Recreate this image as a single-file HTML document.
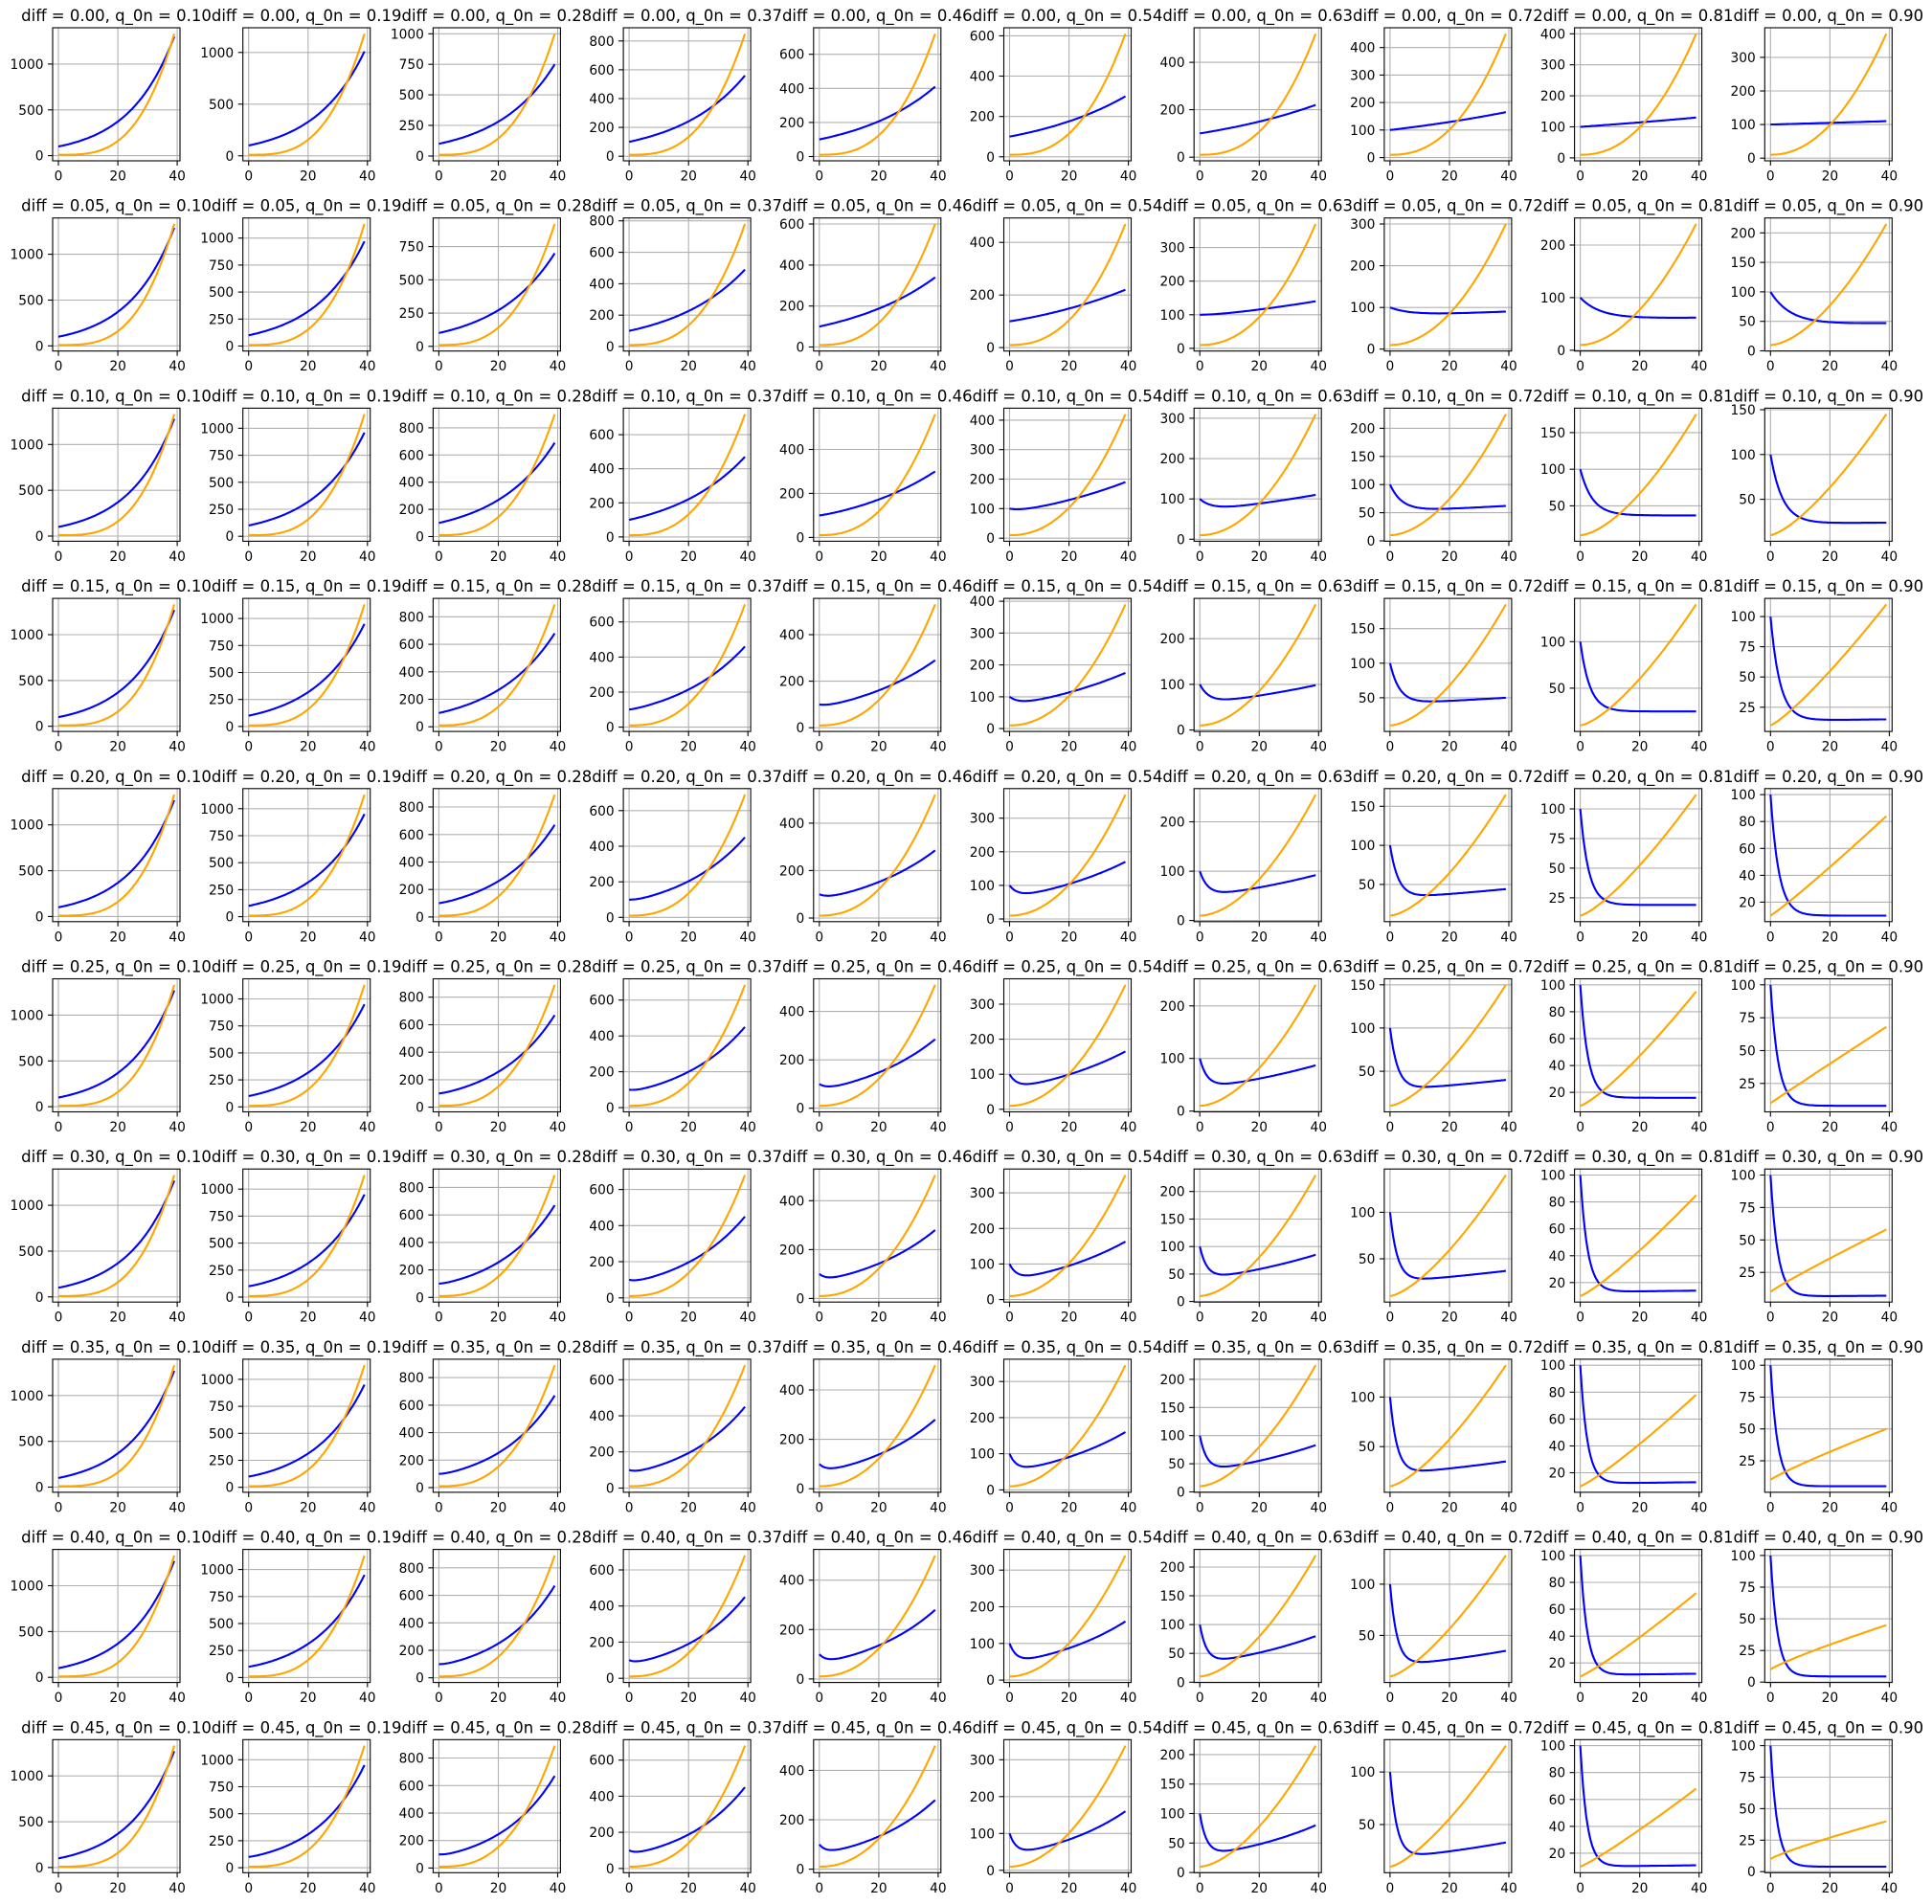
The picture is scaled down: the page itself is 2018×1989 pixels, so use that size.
<!DOCTYPE html>
<html><head><meta charset="utf-8">
<style>
html,body{margin:0;padding:0;background:#fff;}
#c{width:2018px;height:1989px;overflow:hidden;}
text{font-family:"DejaVu Sans","Liberation Sans",sans-serif;fill:#000;}
</style></head>
<body><div id="c"></div>
<script>
const EB=[
[1300,1010,750,560,410,300,220,165,130,110],
[1290,970,700,490,340,220,140,90,62,47],
[1280,960,690,470,300,190,110,62,37,24],
[1270,950,680,460,290,175,98,50,25,15],
[1270,950,670,450,285,170,92,44,19,10],
[1270,950,670,450,285,165,87,40,16,8],
[1270,950,670,450,280,163,85,37,14,7],
[1270,950,670,450,280,160,83,35,13,5],
[1270,950,670,450,280,160,80,35,12,4.5],
[1270,950,670,450,280,160,80,33,11,4]];
const EO=[
[1330,1180,1000,850,720,610,520,450,400,370],
[1330,1130,920,780,600,470,370,300,240,215],
[1330,1130,900,720,560,420,310,225,175,145],
[1330,1130,890,700,530,390,275,185,140,110],
[1330,1130,890,690,520,370,255,165,112,84],
[1330,1130,890,685,510,355,240,150,95,68],
[1330,1130,890,680,505,350,230,140,85,58],
[1330,1130,890,680,500,345,225,132,78,50],
[1330,1130,890,680,500,340,220,128,72,45],
[1330,1130,890,680,500,338,215,125,68,40]];
const CT=[
[100,100,100,100,100,100,100,100,100,100],
[100,100,100,100,100,98,94,80,60,45],
[100,100,100,100,96,86,70,52,37,23],
[100,100,100,96,86,72,57,41,25,14],
[100,100,96,88,78,62,48,32,19,10],
[100,100,94,85,74,58,43,28,16,8],
[100,98,92,82,70,54,40,25,13,6.5],
[100,97,90,80,66,50,36,22,12,5],
[100,96,88,77,63,46,32,20,11,4.5],
[100,95,85,75,60,42,28,18,10,4]];
const QL=["0.10","0.19","0.28","0.37","0.46","0.54","0.63","0.72","0.81","0.90"];
const W=133,H=139,P=198.7,X0=55,Y0=29;
let s='<svg xmlns="http://www.w3.org/2000/svg" width="2018" height="1989" viewBox="0 0 2018 1989"><rect width="2018" height="1989" fill="#fff"/>';
function fmt(v){v=Math.round(v*1000)/1000;return Number.isInteger(v)?String(v):String(v);}
for(let i=0;i<10;i++){for(let j=0;j<10;j++){
 const d=0.05*i,q=0.1+0.8*j/9;
 const ax=X0+P*j,ay=Y0+P*i;
 const C=CT[i][j],k=0.45*(1-Math.exp(-8*d)),E=EB[i][j];
 let inner=E-(100-C)*Math.exp(-39*k); if(inner<=0)inner=C*0.5;
 const a=Math.log(inner/C)/39;
 const p=3.4-1.45*q-1.6*(q-0.1)*(1-Math.exp(-8*d));
 const bl=[],or=[];
 for(let t=0;t<=39;t+=0.5){
  bl.push([t,(100-C)*Math.exp(-k*t)+C*Math.exp(a*t)]);
  or.push([t,10+(EO[i][j]-10)*Math.pow(t/39,p)]);
 }
 let mn=Infinity,mx=-Infinity;
 for(const v of bl.concat(or)){mn=Math.min(mn,v[1]);mx=Math.max(mx,v[1]);}
 const r=mx-mn,vmin=mn-0.05*r,vmax=mx+0.05*r;
 const xmin=-1.95,xmax=40.95;
 const fx=x=>ax+(x-xmin)/(xmax-xmin)*W, fy=y=>ay+H-(y-vmin)/(vmax-vmin)*H;
 // y ticks
 const raw=(vmax-vmin)/5,sc=Math.pow(10,Math.floor(Math.log10(raw)));
 let step=10*sc;for(const m of [1,2,2.5,5,10]){if(m*sc>=raw-1e-9){step=m*sc;break;}}
 const yt=[];for(let n=Math.ceil(vmin/step);n<=Math.floor(vmax/step);n++)yt.push(n*step);
 // grid
 for(const x of [0,20,40]){const X=fx(x).toFixed(1);s+=`<line x1="${X}" y1="${ay}" x2="${X}" y2="${ay+H}" stroke="#b0b0b0" stroke-width="1.1"/>`;}
 for(const y of yt){const Y=fy(y).toFixed(1);s+=`<line x1="${ax}" y1="${Y}" x2="${ax+W}" y2="${Y}" stroke="#b0b0b0" stroke-width="1.1"/>`;}
 // curves
 const pth=arr=>arr.map((v,n)=>(n?'L':'M')+fx(v[0]).toFixed(1)+' '+fy(v[1]).toFixed(1)).join('');
 s+=`<path d="${pth(bl)}" fill="none" stroke="#0000ff" stroke-width="2.1"/>`;
 s+=`<path d="${pth(or)}" fill="none" stroke="#ffa500" stroke-width="2.1"/>`;
 // spines
 s+=`<rect x="${ax}" y="${ay}" width="${W}" height="${H}" fill="none" stroke="#000" stroke-width="1.1"/>`;
 // ticks + labels
 for(const x of [0,20,40]){const X=fx(x);s+=`<line x1="${X.toFixed(1)}" y1="${ay+H}" x2="${X.toFixed(1)}" y2="${ay+H+5}" stroke="#000" stroke-width="1.1"/><text x="${X.toFixed(1)}" y="${(ay+H+20.5).toFixed(1)}" font-size="13.75" text-anchor="middle">${x}</text>`;}
 for(const y of yt){const Y=fy(y);s+=`<line x1="${ax-5}" y1="${Y.toFixed(1)}" x2="${ax}" y2="${Y.toFixed(1)}" stroke="#000" stroke-width="1.1"/><text x="${(ax-9.5).toFixed(1)}" y="${(Y+5).toFixed(1)}" font-size="13.75" text-anchor="end">${fmt(y)}</text>`;}
 s+=`<text x="${(ax+W/2).toFixed(1)}" y="${(ay-7).toFixed(1)}" font-size="16.5" text-anchor="middle">diff = ${d.toFixed(2)}, q_0n = ${QL[j]}</text>`;
}}
s+='</svg>';
document.getElementById('c').innerHTML=s;
</script>
</body></html>
